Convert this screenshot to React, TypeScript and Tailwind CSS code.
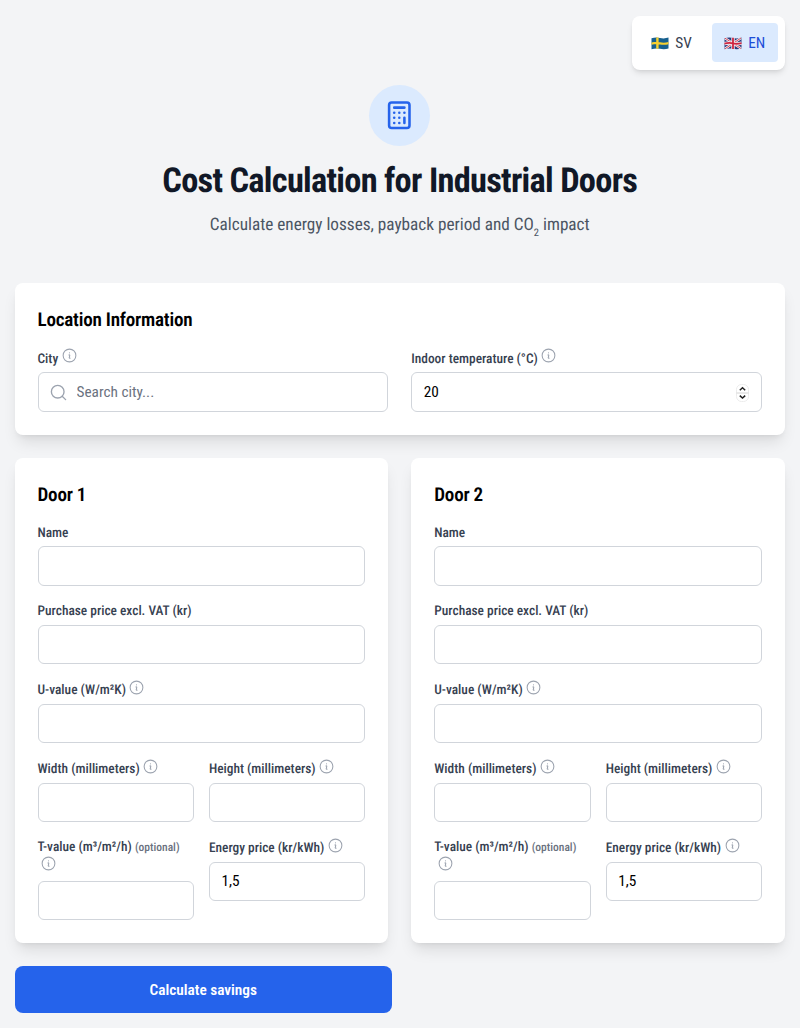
import { useState } from 'react';
import { Calculator, Search } from 'lucide-react';
import { HiOutlineInformationCircle } from 'react-icons/hi2';

const SwedishFlag = () => (
	<svg viewBox="0 0 18 13" className="w-[18px] h-[13px]">
		<path d="M0.5 1.2 Q5 -0.2 9 0.9 T17.5 0.6 V11.6 Q13 12.8 9 11.8 T0.5 12.2Z" fill="#17608f" />
		<path d="M5.2 0.4 h2.4 v11.3 h-2.4z M0.5 5.5 Q5 4.3 9 5.3 T17.5 5 V7.2 Q13 8.4 9 7.4 T0.5 7.8Z" fill="#f6d02f" />
	</svg>
);

const BritishFlag = () => (
	<svg viewBox="0 0 18 13" className="w-[18px] h-[13px]">
		<path d="M0.5 1.2 Q5 -0.2 9 0.9 T17.5 0.6 V11.6 Q13 12.8 9 11.8 T0.5 12.2Z" fill="#2a3a7c" />
		<path d="M1 1.2 L17 11.5 M17 1 L1 11.8" stroke="#f1eef2" strokeWidth="2.4" />
		<path d="M1 1.2 L17 11.5 M17 1 L1 11.8" stroke="#d0344c" strokeWidth="0.9" />
		<path d="M9 0.8 V12 M0.5 6.6 Q5 5.4 9 6.4 T17.5 6.1" stroke="#f1eef2" strokeWidth="3.4" fill="none" />
		<path d="M9 0.8 V12 M0.5 6.6 Q5 5.4 9 6.4 T17.5 6.1" stroke="#cf2540" strokeWidth="1.8" fill="none" />
	</svg>
);

const InfoIcon = ({ className }: { className?: string }) => (
	<HiOutlineInformationCircle
		className={`h-[17px] w-[17px] shrink-0 text-[#9ca3af] ${className}`}
	/>
);

interface FieldProps {
	id: string;
	label: string;
	info?: boolean;
	value?: string;
}

const inputClass =
	'block w-full h-[39.5px] rounded-md border border-[#d1d5db] bg-white px-[11.5px] text-[15.3px] text-black focus:outline-none focus:border-blue-500';

const Field = ({ id, label, info, value = '' }: FieldProps) => {
	const [text, setText] = useState(value);

	return (
		<div>
			<label
				htmlFor={id}
				className={`flex items-start text-[13.4px] leading-5 font-medium text-[#374151] ${
					info ? 'h-[24.5px] pt-[2px]' : 'h-6 pt-[1.5px]'
				}`}
			>
				<span className="whitespace-nowrap">{label}</span>
				{info && <InfoIcon className="ml-[2.5px] -mt-[2.5px]" />}
			</label>
			<input
				id={id}
				className={inputClass}
				value={text}
				onChange={(e) => setText(e.target.value)}
			/>
		</div>
	);
};

const DoorCard = ({ number }: { number: number }) => {
	const [tValue, setTValue] = useState('');

	return (
		<section className="h-[485px] rounded-lg bg-white px-[23px] pt-[23px] shadow-lg">
			<h2 className="text-[19.1px] leading-[27px] font-semibold tracking-[-0.22px] text-black">
				Door {number}
			</h2>
			<div className="mt-[14px] flex flex-col gap-[15px]">
				<Field id={`name-${number}`} label="Name" />
				<Field id={`price-${number}`} label="Purchase price excl. VAT (kr)" />
				<Field id={`u-${number}`} label="U-value (W/m²K)" info />
				<div className="grid grid-cols-2 gap-x-[15px] gap-y-[15px]">
					<Field id={`width-${number}`} label="Width (millimeters)" info />
					<Field id={`height-${number}`} label="Height (millimeters)" info />
					<div>
						<label
							htmlFor={`t-${number}`}
							className="block h-[43.5px] pt-[1px] text-[13.4px] leading-[19px] font-medium text-[#374151]"
						>
							<span className="block whitespace-nowrap">
								T-value (m³/m²/h){' '}
								<span className="text-[11.5px] text-[#6b7280]">(optional)</span>
							</span>
							<InfoIcon className="ml-[2.5px] block -mt-[2px]" />
						</label>
						<input
							id={`t-${number}`}
							className={inputClass}
							value={tValue}
							onChange={(e) => setTValue(e.target.value)}
						/>
					</div>
					<Field id={`energy-${number}`} label="Energy price (kr/kWh)" info value="1,5" />
				</div>
			</div>
		</section>
	);
};

const App = () => {
	const [language, setLanguage] = useState('en');
	const [city, setCity] = useState('');
	const [temperature, setTemperature] = useState('20');

	const languageClass = (code: string) =>
		language == code ? 'bg-[#dbeafe] text-[#1d4ed8]' : 'text-[#374151]';

	return (
		<div className="min-h-[1028px] w-[800px] bg-[#f3f4f6] pr-[15px] pl-[14.5px] pt-4 font-['Roboto_Condensed','Roboto',sans-serif] [font-stretch:75%] [text-rendering:geometricPrecision]">
			<div className="flex justify-end">
				<div className="flex h-[53.5px] gap-2 rounded-lg bg-white px-[7.5px] pt-[7px] pb-[7.5px] shadow-md">
					<button
						className={`flex w-[65px] items-center justify-center gap-[6px] rounded pt-px text-[15.3px] ${languageClass('sv')}`}
						onClick={() => setLanguage('sv')}
					>
						<SwedishFlag />
						SV
					</button>
					<button
						className={`flex w-[65.5px] items-center justify-center gap-[6px] rounded pt-px text-[15.3px] ${languageClass('en')}`}
						onClick={() => setLanguage('en')}
					>
						<BritishFlag />
						EN
					</button>
				</div>
			</div>

			<header className="mt-[15.5px] flex flex-col items-center">
				<div className="flex h-[61px] w-[61px] items-center justify-center rounded-full bg-[#dbeafe]">
					<Calculator className="h-[30.6px] w-[30.6px] text-[#2563eb]" />
				</div>
				<h1 className="mt-[16px] text-[34.4px] leading-[38px] font-bold tracking-[-0.72px] text-[#111827]">
					Cost Calculation for Industrial Doors
				</h1>
				<p className="mt-[12px] h-[27px] text-[17.2px] leading-[27px] text-[#4b5563]">
					Calculate energy losses, payback period and CO
					<sub className="-bottom-[6px] text-[10.5px]">2</sub> impact
				</p>
			</header>

			<section className="mt-[44px] h-[152px] rounded-lg bg-white px-[23px] pt-[23px] shadow-lg">
				<h2 className="text-[19.1px] leading-[27px] font-semibold tracking-[-0.22px] text-black">
					Location Information
				</h2>
				<div className="mt-[15px] grid grid-cols-2 gap-[23px]">
					<div>
						<label
							htmlFor="city"
							className="flex h-6 items-start pt-[2px] text-[13.4px] leading-5 font-medium text-[#374151]"
						>
							City
							<InfoIcon className="ml-[3px] -mt-[3px]" />
						</label>
						<div className="relative">
							<Search
								strokeWidth={1.7}
								className="absolute left-[11px] top-[10.5px] h-[19px] w-[19px] text-[#9ca3af]"
							/>
							<input
								id="city"
								className={`${inputClass} pl-[38px] placeholder:text-[#6b7280]`}
								placeholder="Search city..."
								value={city}
								onChange={(e) => setCity(e.target.value)}
							/>
						</div>
					</div>
					<div>
						<label
							htmlFor="temperature"
							className="flex h-6 items-start pt-[2px] text-[13.4px] leading-5 font-medium text-[#374151]"
						>
							Indoor temperature (°C)
							<InfoIcon className="ml-[2.5px] -mt-[3px]" />
						</label>
						<div className="relative">
							<input
								id="temperature"
								className={inputClass}
								value={temperature}
								onChange={(e) => setTemperature(e.target.value)}
							/>
							<svg
								viewBox="0 0 13 18"
								className="absolute right-[13px] top-[12px] h-[18px] w-[13px]"
								fill="none"
							>
								<rect x="0.5" y="0.5" width="12" height="17" rx="5" stroke="#ececec" />
								<path d="M0.5 9h12" stroke="#d4d4d4" />
								<path
									d="M3.8 6.2 6.5 3.8 9.2 6.2M3.8 11.6 6.5 14 9.2 11.6"
									stroke="#222"
									strokeWidth="1.5"
								/>
							</svg>
						</div>
					</div>
				</div>
			</section>

			<div className="mt-[23px] grid grid-cols-2 gap-[23px]">
				<DoorCard number={1} />
				<DoorCard number={2} />
			</div>

			<button className="mt-[23px] h-[47px] w-[377.5px] rounded-lg bg-[#2563eb] pt-px text-[15.3px] font-semibold text-white">
				Calculate savings
			</button>
		</div>
	);
};

export default App;
